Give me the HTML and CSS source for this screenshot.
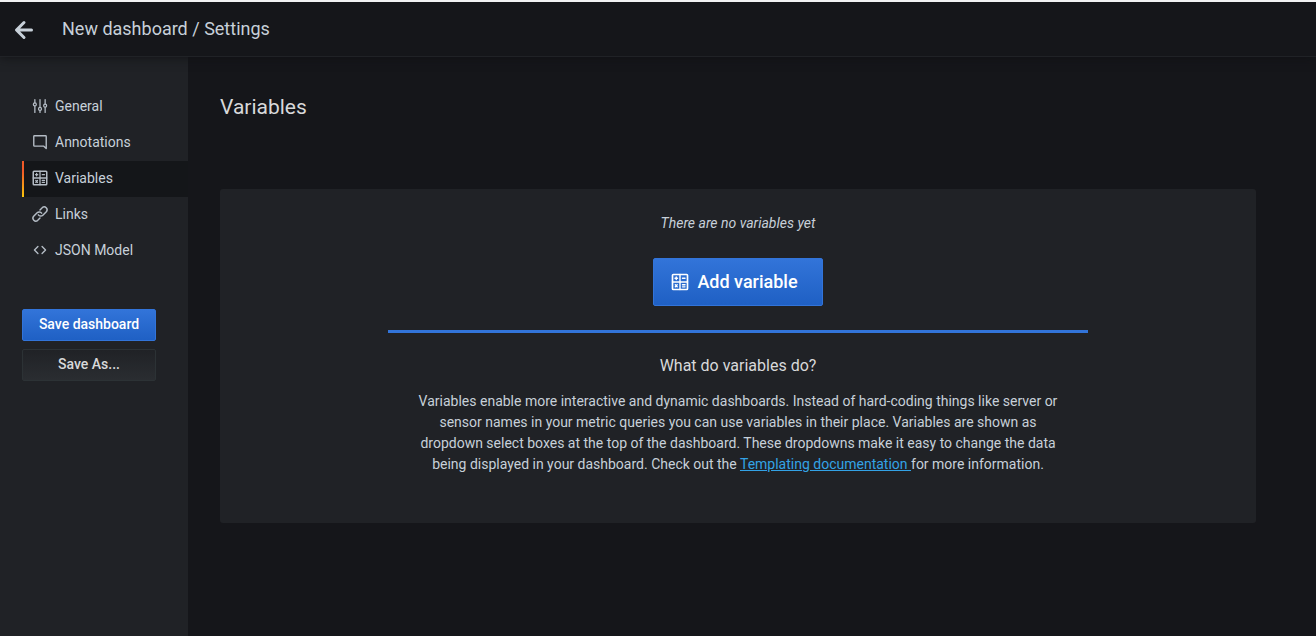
FILE: index.html
```html
<!DOCTYPE html>
<html lang="en">
<head>
<meta charset="utf-8">
<title>New dashboard / Settings</title>
<link rel="stylesheet" href="styles.css">
</head>
<body>
<svg class="sprite" aria-hidden="true">
  <symbol id="calc" viewBox="0 0 24 24">
    <g fill="none" stroke="currentColor" stroke-width="2" stroke-linecap="round" stroke-linejoin="round">
      <rect x="3" y="3" width="18" height="18" rx="1"/>
      <path d="M12 3v18M3 12h18M6 7.500h3M7.500 6v3M15 7.500h3M6.400 15.400l2.200 2.200M8.600 15.400l-2.200 2.200M15 15.200h3M15 17.800h3" stroke-width="1.700"/>
    </g>
  </symbol>
</svg>
<header class="toolbar">
  <button class="back" type="button" aria-label="Go back">
    <svg class="back-icon" viewBox="0 0 24 24"><path fill="currentColor" d="M17,11H9.410l3.300-3.290a1,1,0,1,0-1.420-1.420l-5,5a1,1,0,0,0-.210.330,1,1,0,0,0,0,.760,1,1,0,0,0,.210.330l5,5a1,1,0,0,0,1.420,0,1,1,0,0,0,0-1.420L9.410,13H17a1,1,0,0,0,0-2Z"/></svg>
  </button>
  <div class="toolbar-title">New dashboard / Settings</div>
</header>
<div class="body">
  <aside class="sidebar">
    <nav class="nav">
      <a class="nav-item" href="#general">
        <svg class="icon" viewBox="-2 -2 28 28" fill="none" stroke="currentColor" stroke-width="2" stroke-linecap="round"><path d="M4 2v5M4 12v10M12 2v12M12 19v3M20 2v7M20 14v8"/><circle cx="4" cy="9.500" r="2.300"/><circle cx="12" cy="16.500" r="2.300"/><circle cx="20" cy="11.500" r="2.300"/></svg>
        General</a>
      <a class="nav-item" href="#annotations">
        <svg class="icon" viewBox="-1 -1 26 26" fill="none" stroke="currentColor" stroke-width="2" stroke-linejoin="round"><path d="M4 3h16a1 1 0 0 1 1 1v17.500L17.500 18H4a1 1 0 0 1-1-1V4a1 1 0 0 1 1-1z"/></svg>
        Annotations</a>
      <a class="nav-item active" href="#variables" aria-current="page">
        <svg class="icon"><use href="#calc"/></svg>
        Variables</a>
      <a class="nav-item" href="#links">
        <svg class="icon" viewBox="1 1 22 22" fill="none" stroke="currentColor" stroke-width="1.800" stroke-linecap="round"><path d="M12 17l-3 3a3.600 3.600 0 0 1-5-5l4.500-4.500a3.600 3.600 0 0 1 5.500.500M12 7l3-3a3.600 3.600 0 0 1 5 5l-4.500 4.500a3.600 3.600 0 0 1-5.500-.500"/></svg>
        Links</a>
      <a class="nav-item" href="#json">
        <svg class="icon" viewBox="-1 -1 26 26" fill="none" stroke="currentColor" stroke-width="2" stroke-linecap="round" stroke-linejoin="round"><path d="M9 7l-5 5 5 5M15 7l5 5-5 5"/></svg>
        JSON Model</a>
    </nav>
    <div class="actions">
      <button class="btn primary" type="button">Save dashboard</button>
      <button class="btn secondary" type="button">Save As...</button>
    </div>
  </aside>
  <main class="content">
    <h1 class="page-title">Variables</h1>
    <section class="card">
      <p class="empty">There are no variables yet</p>
      <button class="btn primary large" type="button"><svg class="icon-large"><use href="#calc"/></svg>Add variable</button>
      <div class="info">
        <h2 class="info-title">What do variables do?</h2>
        <p class="info-text">Variables enable more interactive and dynamic dashboards. Instead of hard-coding things like server or sensor names in your metric queries you can use variables in their place. Variables are shown as dropdown select boxes at the top of the dashboard. These dropdowns make it easy to change the data being displayed in your dashboard. Check out the <a class="link" href="#docs">Templating documentation </a>for more information.</p>
      </div>
    </section>
  </main>
</div>
</body>
</html>
```
FILE: styles.css
```css
* { box-sizing: border-box; }
body {
  margin: 0;
  min-height: 100vh;
  display: flex;
  flex-direction: column;
  background: #15161a;
  color: #c7d0d9;
  font: 14px/21px Roboto, sans-serif;
}
.sprite { position: absolute; width: 0; height: 0; }
.toolbar {
  display: flex;
  align-items: center;
  gap: 20px;
  height: 57px;
  padding-left: 6px;
  border-top: 2px solid #f1f2f3;
  border-bottom: 1px solid #202226;
  box-shadow: 0 0 10px #101114;
  z-index: 1;
}
.back {
  display: flex;
  padding: 2px 0 0;
  border: 0;
  background: none;
  color: #c7d0d9;
}
.back-icon { width: 36px; height: 36px; }
.toolbar-title { font-size: 18px; line-height: 24px; padding-bottom: 1px; }
.body { flex: 1; display: flex; }
.sidebar {
  flex: none;
  width: 188px;
  padding: 32px 0 0 22px;
  background: #202226;
}
.nav { display: flex; flex-direction: column; }
.nav-item {
  display: flex;
  align-items: center;
  gap: 6px;
  height: 36px;
  padding: 0 0 2px 9px;
  color: #c7d0d9;
  text-decoration: none;
}
.nav-item.active {
  padding-left: 7px;
  background: #141619;
  border-left: 2px solid;
  border-image: linear-gradient(#f05a28 30%, #fbca0a) 1;
}
.icon { width: 18px; height: 18px; color: #b4bcc5; }
.actions {
  display: flex;
  flex-direction: column;
  gap: 8px;
  margin: 40px 32px 0 0;
}
.btn {
  height: 32px;
  padding: 0 8px 2px;
  border: 1px solid;
  border-radius: 2px;
  font: 500 14px/21px Roboto, sans-serif;
}
.primary {
  color: #fff;
  background: linear-gradient(#3274d9, #1f60c4);
  border-color: #3274d9;
}
.secondary {
  color: #d8d9da;
  background: linear-gradient(#202226, #2a2d31);
  border-color: #2c3235;
}
.large {
  display: flex;
  align-items: center;
  gap: 7px;
  height: 48px;
  padding: 0 24px 1px 16px;
  font-size: 18px;
}
.icon-large { width: 20px; height: 20px; }
.content { flex: 1; padding: 36px 60px 0 32px; }
.page-title {
  margin: 0 0 68px;
  font-size: 21px;
  line-height: 28px;
  font-weight: 400;
  color: #d8d9da;
}
.card {
  display: flex;
  flex-direction: column;
  align-items: center;
  padding: 24px 24px 48px;
  border-radius: 3px;
  background: #202226;
}
.empty { margin: 0 0 24px; font-style: italic; }
.info {
  width: 100%;
  max-width: 700px;
  margin-top: 24px;
  padding: 24px 28px 0;
  border-top: 3px solid #3274d9;
  text-align: center;
}
.info-title {
  margin: 0 0 16px;
  font-size: 16px;
  line-height: 18px;
  font-weight: 400;
  color: #d8d9da;
}
.info-text { margin: 0; }
.link { color: #33a2e5; text-decoration: underline; }
```
